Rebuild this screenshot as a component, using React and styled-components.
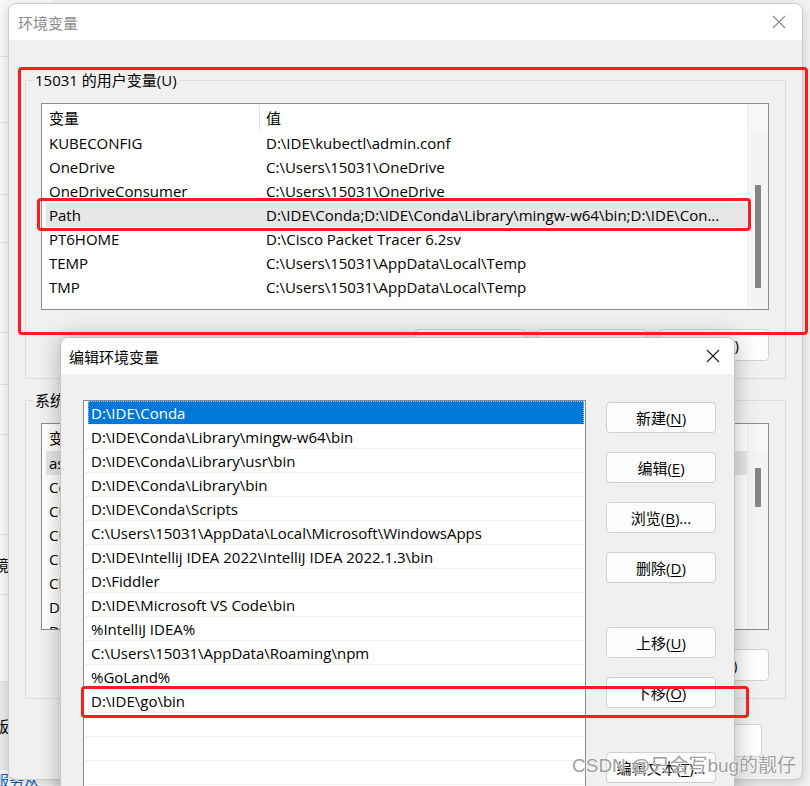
import React from "react";
import styled, { createGlobalStyle } from "styled-components";

const GlobalStyle = createGlobalStyle`
  html, body { margin: 0; padding: 0; }
  body {
    background: #f3f3f3;
    font-family: "Open Sans", "Noto Sans CJK SC", sans-serif;
    font-size: 15px;
    color: #000;
  }
  * { box-sizing: border-box; }
`;

const Desktop = styled.div`
  position: relative;
  width: 810px;
  height: 786px;
  overflow: hidden;
  background: #f3f3f3;
`;

/* the settings window peeking out on the far left */
const SideWindow = styled.div`
  position: absolute;
  left: -7px;
  top: 0;
  width: 60px;
  height: 786px;
  background: #f9f9f9;
  display: flex;
  flex-direction: column;
`;

const SideRow = styled.div`
  height: ${(p) => p.$h}px;
  flex-shrink: 0;
  border-bottom: 1px solid ${(p) => (p.$link ? "transparent" : "#e2e2e2")};
  line-height: ${(p) => (p.$link ? 20 : p.$h)}px;
  font-size: 15px;
  background: ${(p) => (p.$dark ? "#e9e9e9" : "transparent")};
  color: ${(p) => (p.$link ? "#0d5fb5" : "#000")};
  padding-left: 1px;
  white-space: nowrap;
`;

const Window = styled.div`
  position: absolute;
  left: 8px;
  top: 3px;
  width: 795px;
  height: 777px;
  background: #f0f0f0;
  border: 1px solid #cdcdcd;
  border-radius: 8px;
  box-shadow: 0 3px 12px rgba(0, 0, 0, 0.18);
  overflow: hidden;
  display: flex;
  flex-direction: column;
`;

const TitleBar = styled.div`
  height: 36px;
  flex-shrink: 0;
  background: #fff;
  display: flex;
  align-items: center;
  justify-content: space-between;
  padding: 0 ${(p) => p.$padRight}px 0 ${(p) => p.$padLeft}px;
  color: ${(p) => (p.$inactive ? "#8c8c8c" : "#000")};
  font-size: 15px;
`;

const CloseIcon = ({ color }) => (
  <svg width="14" height="14" viewBox="0 0 14 14">
    <path d="M1 1 L13 13 M13 1 L1 13" stroke={color} strokeWidth="1.1" fill="none" />
  </svg>
);

const WindowBody = styled.div`
  flex: 1;
  display: flex;
  flex-direction: column;
  padding: 40px 16px 0 16px;
`;

const GroupBox = styled.div`
  display: flex;
  flex-direction: column;
  border: 1px solid #dcdcdc;
  padding: 0 16px 17px 15px;
  margin-top: ${(p) => p.$top || 0}px;
`;

const GroupTitle = styled.div`
  align-self: flex-start;
  margin: -11px 0 0 -8px;
  padding: 0 2px;
  line-height: 20px;
  background: #f0f0f0;
`;

const ListView = styled.div`
  margin-top: 13px;
  height: 207px;
  border: 1px solid #8b8b97;
  background: #fff;
  display: flex;
  overflow: hidden;
`;

const Table = styled.div`
  flex: 1;
  display: flex;
  flex-direction: column;
`;

const HeadRow = styled.div`
  height: 27px;
  display: flex;
  align-items: center;
  margin-left: 4px;
  flex-shrink: 0;
`;

const DataRow = styled.div`
  height: 24px;
  display: flex;
  align-items: center;
  margin-left: 4px;
  flex-shrink: 0;
  background: ${(p) => (p.$selected ? "#e6e6e6" : "transparent")};
`;

const NameCell = styled.div`
  width: 213px;
  padding-left: 3px;
  white-space: nowrap;
  overflow: hidden;
`;

const HeadDivider = styled.div`
  width: 1px;
  height: 25px;
  background: #e5e5e5;
`;

const ValueCell = styled.div`
  flex: 1;
  padding-left: ${(p) => (p.$head ? 6 : 7)}px;
  white-space: nowrap;
  overflow: hidden;
`;

const ScrollTrack = styled.div`
  width: 21px;
  flex-shrink: 0;
  background: #f4f4f4;
  border-left: 1px solid #f0f0f0;
  display: flex;
  flex-direction: column;
  align-items: center;
`;

const ScrollHead = styled.div`
  width: 100%;
  height: 27px;
  background: #f7f7f7;
`;

const ScrollThumb = styled.div`
  width: 6px;
  margin-top: ${(p) => p.$offset}px;
  height: ${(p) => p.$size}px;
  background: #858585;
  border-radius: 1px;
`;

const ButtonRow = styled.div`
  display: flex;
  justify-content: flex-end;
  gap: 12px;
  margin-top: ${(p) => p.$top}px;
  margin-right: ${(p) => p.$right || 0}px;
`;

const Button = styled.div`
  width: 110px;
  height: ${(p) => p.$h || 32}px;
  margin-top: ${(p) => p.$top || 0}px;
  flex-shrink: 0;
  display: flex;
  align-items: center;
  justify-content: center;
  background: #fdfdfd;
  border: 1px solid #d0d0d0;
  border-radius: 4px;
  font-size: 15px;
  white-space: nowrap;
  u { text-underline-offset: 2px; }
`;

const Dialog = styled.div`
  position: absolute;
  left: 60px;
  top: 337px;
  width: 675px;
  height: 480px;
  background: #f0f0f0;
  border: 1px solid #c4c4c4;
  border-radius: 8px 8px 0 0;
  box-shadow: 0 0 22px rgba(0, 0, 0, 0.28);
  overflow: hidden;
  display: flex;
  flex-direction: column;
`;

const DialogBody = styled.div`
  display: flex;
  gap: 20px;
  padding: 26px 18px 0 22px;
`;

const PathList = styled.div`
  width: 503px;
  height: 420px;
  flex-shrink: 0;
  border: 1px solid #8b8b97;
  background: #fff;
  display: flex;
  flex-direction: column;
  padding: 0 1px;
`;

const PathRow = styled.div`
  height: 24px;
  flex-shrink: 0;
  display: flex;
  align-items: center;
  border-bottom: 1px solid #efefef;
  white-space: nowrap;
  margin-left: ${(p) => (p.$selected ? 3 : 0)}px;
  padding-left: ${(p) => (p.$selected ? 3 : 6)}px;
  background: ${(p) => (p.$selected ? "#0078d7" : "#fff")};
  color: ${(p) => (p.$selected ? "#fff" : "#000")};
  outline: ${(p) => (p.$selected ? "1px dotted rgba(255,255,255,0.6)" : "none")};
  outline-offset: -1px;
`;

const ButtonColumn = styled.div`
  width: 110px;
  display: flex;
  flex-direction: column;
  padding-top: 2px;
`;

const Highlight = styled.div`
  position: absolute;
  left: ${(p) => p.$x}px;
  top: ${(p) => p.$y}px;
  width: ${(p) => p.$w}px;
  height: ${(p) => p.$h}px;
  border: 3px solid #fe1d1d;
  border-radius: 4px;
  pointer-events: none;
`;

const Watermark = styled.div`
  position: absolute;
  left: 572px;
  top: 754px;
  font-size: 19px;
  line-height: 24px;
  color: #a0a0a0;
  text-shadow: 0 0 2px #fff, 0 0 1px #fff;
  white-space: nowrap;
  font-family: "Liberation Sans", "Noto Sans CJK SC", sans-serif;
`;

const userVars = [
  ["KUBECONFIG", "D:\\IDE\\kubectl\\admin.conf"],
  ["OneDrive", "C:\\Users\\15031\\OneDrive"],
  ["OneDriveConsumer", "C:\\Users\\15031\\OneDrive"],
  ["Path", "D:\\IDE\\Conda;D:\\IDE\\Conda\\Library\\mingw-w64\\bin;D:\\IDE\\Con..."],
  ["PT6HOME", "D:\\Cisco Packet Tracer 6.2sv"],
  ["TEMP", "C:\\Users\\15031\\AppData\\Local\\Temp"],
  ["TMP", "C:\\Users\\15031\\AppData\\Local\\Temp"],
];

const sysVars = [
  ["asl.log", "Destination=file"],
  ["ComSpec", "C:\\Windows\\system32\\cmd.exe"],
  ["CUDA_PATH", "C:\\Program Files\\NVIDIA GPU Computing Toolkit"],
  ["CUDA_PATH_V11_6", "C:\\Program Files\\NVIDIA GPU Computing Toolkit"],
  ["CLASSPATH", ".;%JAVA_HOME%\\lib"],
  ["ChocolateyInstall", "C:\\ProgramData\\chocolatey"],
  ["DriverData", "C:\\Windows\\System32\\Drivers\\DriverData"],
  ["DEVMGR", "1"],
];

const paths = [
  "D:\\IDE\\Conda",
  "D:\\IDE\\Conda\\Library\\mingw-w64\\bin",
  "D:\\IDE\\Conda\\Library\\usr\\bin",
  "D:\\IDE\\Conda\\Library\\bin",
  "D:\\IDE\\Conda\\Scripts",
  "C:\\Users\\15031\\AppData\\Local\\Microsoft\\WindowsApps",
  "D:\\IDE\\Intellij IDEA 2022\\IntelliJ IDEA 2022.1.3\\bin",
  "D:\\Fiddler",
  "D:\\IDE\\Microsoft VS Code\\bin",
  "%IntelliJ IDEA%",
  "C:\\Users\\15031\\AppData\\Roaming\\npm",
  "%GoLand%",
  "D:\\IDE\\go\\bin",
  "",
  "",
  "",
  "",
];

const VarList = ({ rows, selected, thumbOffset, thumbSize }) => (
  <ListView>
    <Table>
      <HeadRow>
        <NameCell>变量</NameCell>
        <HeadDivider />
        <ValueCell $head>值</ValueCell>
      </HeadRow>
      {rows.map(([name, value], i) => (
        <DataRow key={name} $selected={i === selected}>
          <NameCell>{name}</NameCell>
          <ValueCell>{value}</ValueCell>
        </DataRow>
      ))}
    </Table>
    <ScrollTrack>
      <ScrollHead />
      <ScrollThumb $offset={thumbOffset} $size={thumbSize} />
    </ScrollTrack>
  </ListView>
);

const App = () => {
  return (
    <Desktop>
      <GlobalStyle />

      <SideWindow>
        <SideRow $h={57} />
        <SideRow $h={66} />
        <SideRow $h={72} />
        <SideRow $h={48} />
        <SideRow $h={90} />
        <SideRow $h={52} />
        <SideRow $h={50} />
        <SideRow $h={100} />
        <SideRow $h={60}>境</SideRow>
        <SideRow $h={87} />
        <SideRow $h={88} $dark>
          版
        </SideRow>
        <SideRow $h={16} $link>
          服务从
        </SideRow>
      </SideWindow>

      <Window>
        <TitleBar $inactive $padLeft={9} $padRight={16}>
          <span>环境变量</span>
          <CloseIcon color="#8a8a8a" />
        </TitleBar>
        <WindowBody>
          <GroupBox>
            <GroupTitle>15031 的用户变量(U)</GroupTitle>
            <VarList rows={userVars} selected={3} thumbOffset={54} thumbSize={103} />
            <ButtonRow $top={19}>
              <Button>新建(<u>N</u>)...</Button>
              <Button>编辑(<u>E</u>)...</Button>
              <Button>删除(<u>D</u>)</Button>
            </ButtonRow>
          </GroupBox>

          <GroupBox $top={21}>
            <GroupTitle>系统变量(S)</GroupTitle>
            <VarList rows={sysVars} selected={0} thumbOffset={17} thumbSize={39} />
            <ButtonRow $top={19}>
              <Button>新建(<u>W</u>)...</Button>
              <Button>编辑(<u>I</u>)...</Button>
              <Button>删除(<u>L</u>)</Button>
            </ButtonRow>
          </GroupBox>

          <ButtonRow $top={25} $right={24}>
            <Button $h={33}>确定</Button>
            <Button $h={33}>取消</Button>
          </ButtonRow>
        </WindowBody>
      </Window>

      <Dialog>
        <TitleBar $padLeft={8} $padRight={14}>
          <span>编辑环境变量</span>
          <CloseIcon color="#1a1a1a" />
        </TitleBar>
        <DialogBody>
          <PathList>
            {paths.map((p, i) => (
              <PathRow key={i} $selected={i === 0}>
                {p}
              </PathRow>
            ))}
          </PathList>
          <ButtonColumn>
            <Button $h={31}>新建(<u>N</u>)</Button>
            <Button $h={31} $top={19}>编辑(<u>E</u>)</Button>
            <Button $h={31} $top={19}>浏览(<u>B</u>)...</Button>
            <Button $h={31} $top={19}>删除(<u>D</u>)</Button>
            <Button $h={31} $top={44}>上移(<u>U</u>)</Button>
            <Button $h={31} $top={19}>下移(<u>O</u>)</Button>
            <Button $h={31} $top={44}>编辑文本(<u>T</u>)...</Button>
          </ButtonColumn>
        </DialogBody>
      </Dialog>

      <Highlight $x={18} $y={67} $w={790} $h={268} />
      <Highlight $x={37} $y={198} $w={714} $h={33} />
      <Highlight $x={81} $y={686} $w={668} $h={32} />

      <Watermark>CSDN @只会写bug的靓仔</Watermark>
    </Desktop>
  );
};

export default App;
